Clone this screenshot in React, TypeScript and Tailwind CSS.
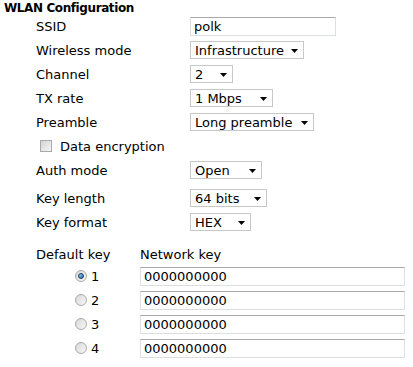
import React, { useState } from 'react';

const font = { fontFamily: '"DejaVu Sans", Verdana, sans-serif' };

function Select({ value, width }: { value: string; width: string }) {
  return (
    <div
      className={`relative flex h-[18px] items-center border border-[#c8c8c8] bg-white pl-[4px] text-[13px] text-black ${width}`}
    >
      <span className="leading-none">{value}</span>
      <svg className="absolute right-[5px] top-[7px]" width="7" height="4" viewBox="0 0 7 4">
        <path d="M0 0h7L3.5 4z" fill="#000" />
      </svg>
    </div>
  );
}

function TextBox({ value, width }: { value: string; width: string }) {
  return (
    <div
      className={`flex h-[19px] items-center border border-[#dcdfe3] border-t-[#a8a8a8] bg-white pl-[3px] text-[13px] text-black ${width}`}
    >
      <span className="leading-none">{value}</span>
    </div>
  );
}

function Row({ label, children, className = 'h-[24px]' }: { label: string; children: React.ReactNode; className?: string }) {
  return (
    <div className={`flex items-center ${className}`}>
      <div className="w-[154px] text-[13px] leading-none text-black">{label}</div>
      {children}
    </div>
  );
}

function Radio({ checked }: { checked: boolean }) {
  return (
    <div className="flex h-[12px] w-[12px] items-center justify-center rounded-full border border-[#a9a9a9] bg-gradient-to-br from-[#d9d9d9] to-[#f7f7f7]">
      {checked && (
        <div className="h-[6px] w-[6px] rounded-full border border-[#1a3b5c] bg-gradient-to-br from-[#9fd0f0] to-[#1f6aa8]" />
      )}
    </div>
  );
}

export default function App() {
  const [selected] = useState(1);
  const keys = [1, 2, 3, 4];

  return (
    <div className="h-[367px] w-[413px] bg-white" style={font}>
      <div className="flex h-[15px] items-center pl-[4px] text-[12px] font-bold leading-none text-black tracking-[-0.4px]">
        WLAN Configuration
      </div>
      <div className="pl-[36px]">
        <Row label="SSID" className="h-[23px]">
          <TextBox value="polk" width="w-[146px]" />
        </Row>
        <Row label="Wireless mode">
          <Select value="Infrastructure" width="w-[114px]" />
        </Row>
        <Row label="Channel">
          <Select value="2" width="w-[43px]" />
        </Row>
        <Row label="TX rate">
          <Select value="1 Mbps" width="w-[83px]" />
        </Row>
        <Row label="Preamble">
          <Select value="Long preamble" width="w-[124px]" />
        </Row>
        <div className="flex h-[24px] items-center pl-[4px]">
          <div className="h-[12px] w-[12px] border border-[#a9a9a9] bg-gradient-to-br from-[#d4d4d4] to-[#f5f5f5]" />
          <span className="pl-[8px] text-[13px] leading-none text-black">Data encryption</span>
        </div>
        <Row label="Auth mode">
          <Select value="Open" width="w-[72px]" />
        </Row>
        <Row label="Key length" className="mt-[4px] h-[24px]">
          <Select value="64 bits" width="w-[77px]" />
        </Row>
        <Row label="Key format">
          <Select value="HEX" width="w-[61px]" />
        </Row>
        <div className="mt-[10px] flex h-[20px] items-center text-[13px] leading-none text-black">
          <div className="w-[104px]">Default key</div>
          <div>Network key</div>
        </div>
        {keys.map((k) => (
          <div key={k} className="flex h-[24px] items-center">
            <div className="flex w-[104px] items-center pl-[39px]">
              <Radio checked={k === selected} />
              <span className="pl-[4px] text-[13px] leading-none text-black">{k}</span>
            </div>
            <TextBox value="0000000000" width="w-[265px]" />
          </div>
        ))}
      </div>
    </div>
  );
}
